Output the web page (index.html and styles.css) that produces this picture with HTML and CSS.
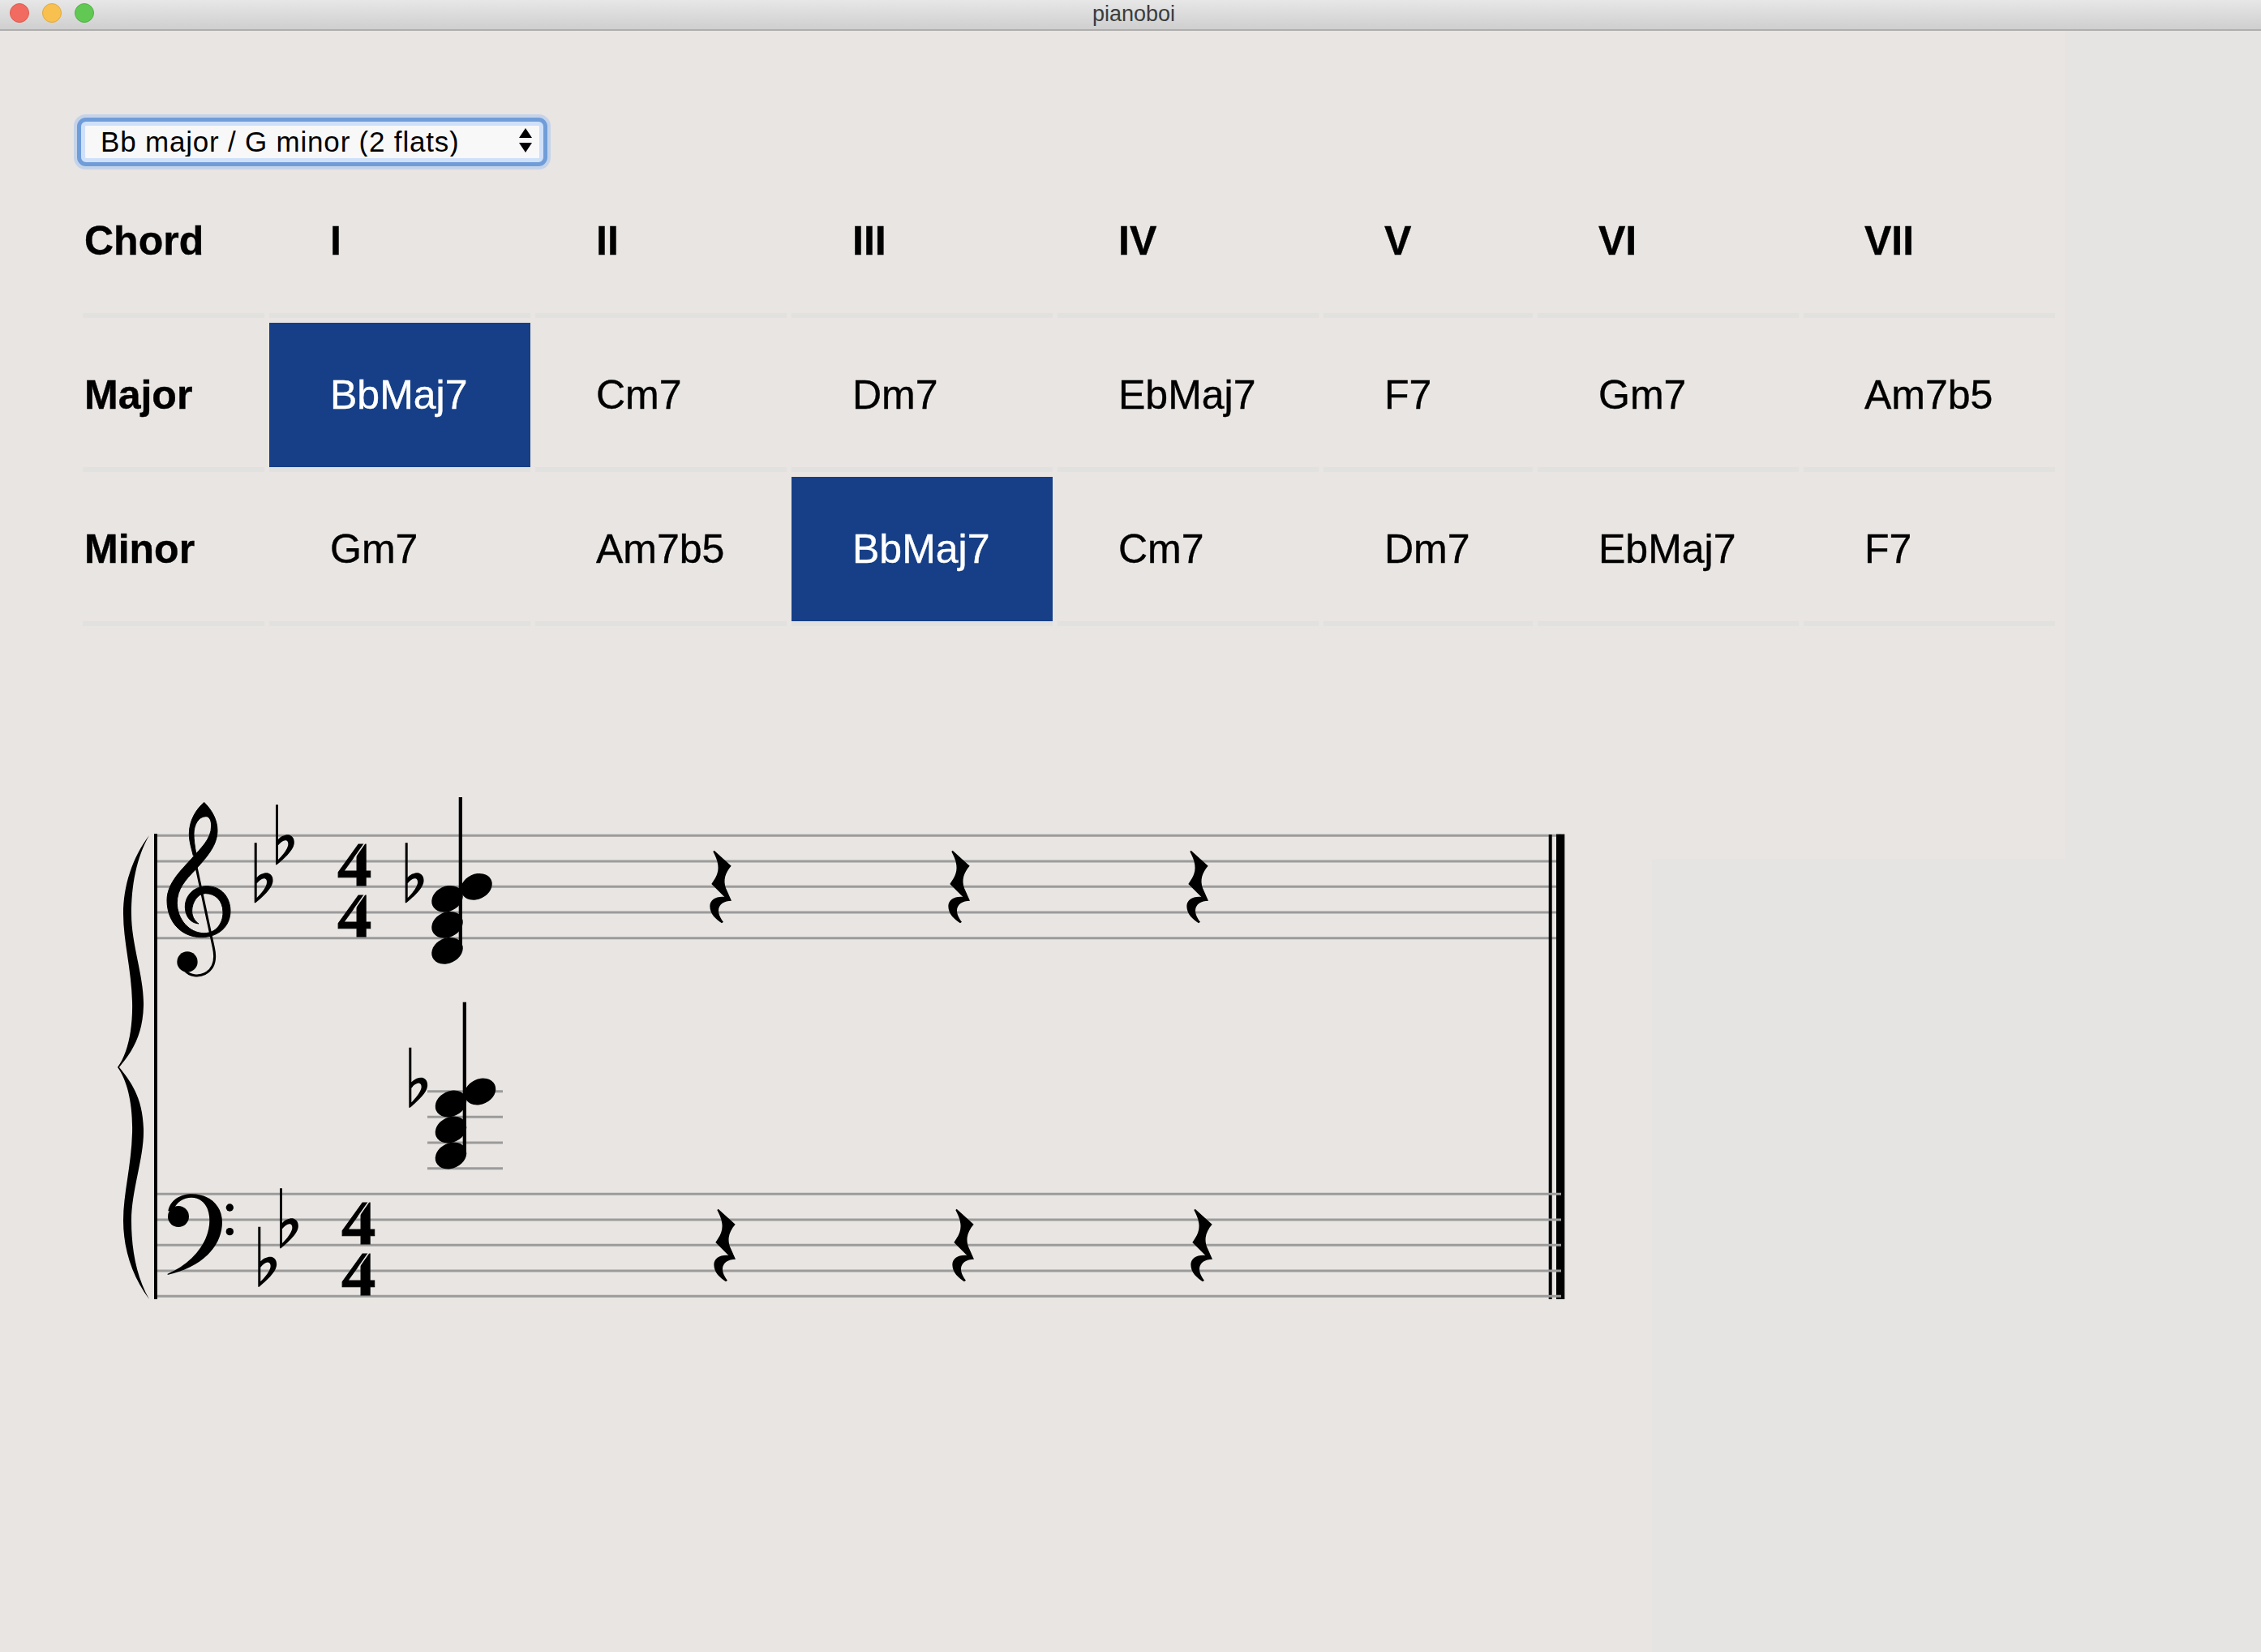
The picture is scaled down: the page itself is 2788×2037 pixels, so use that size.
FILE: index.html
```html
<!DOCTYPE html>
<html>
<head>
    <title>pianoboi</title>
    <link rel="stylesheet" href="styles.css">
</head>
<body>
    <div class="titlebar">
        <div class="lights">
            <span class="light light-red"></span>
            <span class="light light-yellow"></span>
            <span class="light light-green"></span>
        </div>
        <div class="window-title">pianoboi</div>
    </div>

    <div class="content">
        <div class="key-picker">
            <select class="key-select">
                <option>Bb major / G minor (2 flats)</option>
            </select>
            <svg class="select-arrows" width="16" height="30" viewBox="0 0 16 30">
                <path d="M8 0L16 12H0Z"/>
                <path d="M0 18H16L8 30Z"/>
            </svg>
        </div>

        <table class="chords">
            <colgroup>
                <col class="col-label">
                <col class="col-wide">
                <col class="col-mid">
                <col class="col-wide">
                <col class="col-wide">
                <col class="col-narrow">
                <col class="col-wide">
                <col class="col-mid">
            </colgroup>
            <tr>
                <th class="row-label">Chord</th>
                <th>I</th>
                <th>II</th>
                <th>III</th>
                <th>IV</th>
                <th>V</th>
                <th>VI</th>
                <th>VII</th>
            </tr>
            <tr>
                <th class="row-label">Major</th>
                <td class="current">BbMaj7</td>
                <td>Cm7</td>
                <td>Dm7</td>
                <td>EbMaj7</td>
                <td>F7</td>
                <td>Gm7</td>
                <td>Am7b5</td>
            </tr>
            <tr>
                <th class="row-label">Minor</th>
                <td>Gm7</td>
                <td>Am7b5</td>
                <td class="current">BbMaj7</td>
                <td>Cm7</td>
                <td>Dm7</td>
                <td>EbMaj7</td>
                <td>F7</td>
            </tr>
        </table>

        <svg class="score" width="1900" height="680" viewBox="100 960 1900 680">
            <defs>
                <g id="flat" transform="scale(.3333)">
                    <path fill-rule="evenodd" d="M0 0H9V128C20 115 40 108 52 112C66 118 70 130 68 145C64 170 30 200 4 222H0ZM9 150V203C22 190 38 172 44 155C48 145 46 134 38 132C30 130 18 138 9 150Z"/>
                </g>
                <g id="rest" transform="scale(.3333)">
                    <path d="M88 90L92 86L155 143C132 170 125 195 135 225L156 272C130 272 108 285 108 308C108 325 118 340 126 350L120 355C100 342 76 322 76 292C76 268 100 255 130 258L82 210C95 190 110 170 106 140C104 120 95 105 88 90Z"/>
                </g>
                <g id="chord">
                    <ellipse cx="0" cy="0" rx="20" ry="15.5" transform="rotate(-25)"/>
                    <ellipse cx="0" cy="32" rx="20" ry="15.5" transform="rotate(-25 0 32)"/>
                    <ellipse cx="0" cy="64" rx="20" ry="15.5" transform="rotate(-25 0 64)"/>
                    <ellipse cx="36" cy="-15" rx="20" ry="15.5" transform="rotate(-25 36 -15)"/>
                </g>
            </defs>

            <!-- top staff -->
            <path class="staff-line" d="M193 1030.3H1925M193 1062H1919M193 1093.3H1919M193 1125H1919M193 1156.7H1919"/>

            <!-- final barline -->
            <rect x="1909.7" y="1029" width="4" height="573"/>
            <rect x="1919" y="1028.6" width="10.3" height="573.4"/>

            <!-- bottom staff, drawn over the barline like the app does -->
            <path class="staff-line" d="M193 1472.3H1925M193 1504H1925M193 1535.3H1925M193 1567H1925M193 1598.3H1925"/>

            <!-- brace and left barline -->
            <path d="M184 1030C163 1058 152 1092 152 1127C152 1160 162 1195 163 1235C164 1270 157 1300 145 1316C157 1332 164 1362 163 1397C162 1437 152 1472 152 1505C152 1540 163 1574 184 1602C168 1574 162 1540 162 1505C162 1467 178 1427 177 1392C176 1352 160 1332 147 1316C160 1300 176 1280 177 1240C178 1205 162 1165 162 1127C162 1092 168 1058 184 1030Z"/>
            <rect x="190" y="1028" width="4" height="574"/>

            <!-- treble clef -->
            <g transform="translate(130 960) scale(.3333)">
                <path class="clef-body" d="M365 88C392 115 414 150 414 192C414 245 380 285 335 335C295 375 265 410 265 460C265 520 310 572 365 572C410 572 435 535 435 495C435 450 405 425 370 425C340 425 320 460 320 490C320 515 335 530 345 537C315 535 295 510 295 475C295 430 330 398 375 398C430 398 462 440 462 490C462 550 415 587 355 587C280 587 228 530 228 450C228 385 285 335 320 295C350 260 392 225 392 175C392 155 385 140 372 140C345 140 327 170 327 205C327 225 330 250 336 280L325 285C318 255 310 235 310 205C310 155 335 115 365 88Z"/>
                <path class="clef-stem" d="M328 290L400 625C410 670 400 705 368 722C345 734 312 730 296 712"/>
                <circle cx="303" cy="678" r="38"/>
            </g>

            <!-- bass clef -->
            <g transform="translate(130 1230) scale(.3333)">
                <path d="M230 1026C350 1000 432 925 432 830C432 770 385 727 320 727C275 727 240 750 232 790L250 790C262 755 290 740 318 740C360 740 385 775 385 825C385 905 320 985 230 1022Z"/>
                <circle cx="270" cy="810" r="39"/>
                <circle cx="460" cy="777" r="14"/>
                <circle cx="460" cy="866" r="14"/>
            </g>

            <!-- key signatures -->
            <use href="#flat" transform="translate(313.7 1039.3)"/>
            <use href="#flat" transform="translate(340 992.3)"/>
            <use href="#flat" transform="translate(318.3 1512.7)"/>
            <use href="#flat" transform="translate(345 1465.3)"/>

            <!-- time signatures -->
            <text class="time" transform="translate(416 0) scale(1.07 1)" x="0 0" y="1092 1155">44</text>
            <text class="time" transform="translate(421 0) scale(1.07 1)" x="0 0" y="1534 1597">44</text>
            <path class="time-slash" d="M451 1038L437 1058M451 1101L437 1121M456 1480L442 1500M456 1543L442 1563"/>

            <!-- top chord -->
            <use href="#flat" transform="translate(499.7 1039.3)"/>
            <use href="#chord" transform="translate(551.5 1108.3)"/>
            <rect x="565.7" y="983" width="4.3" height="190"/>

            <!-- bottom chord with ledger lines -->
            <path class="staff-line" d="M527 1345.7H620M527 1377.3H620M527 1409H620M527 1440.7H620"/>
            <use href="#flat" transform="translate(504.3 1291.7)"/>
            <use href="#chord" transform="translate(556 1361)"/>
            <rect x="570.7" y="1235.7" width="4.3" height="188"/>

            <!-- rests -->
            <use href="#rest" transform="translate(850 1020)"/>
            <use href="#rest" transform="translate(1144 1020)"/>
            <use href="#rest" transform="translate(1438 1020)"/>
            <use href="#rest" transform="translate(855 1462)"/>
            <use href="#rest" transform="translate(1149 1462)"/>
            <use href="#rest" transform="translate(1443 1462)"/>
        </svg>
    </div>
</body>
</html>
```

FILE: styles.css
```css
html, body {
    margin: 0;
    height: 2037px;
    overflow: hidden;
}
body {
    font-family: "Liberation Sans", Arial, sans-serif;
    color: #000;
    background-color: #e9e5e2;
    background-image: linear-gradient(#e5e4e2, #e5e4e2), linear-gradient(#e5e4e2, #e5e4e2);
    background-repeat: no-repeat;
    background-position: 2037px 1059px, 2546px 0;
    background-size: 751px 978px, 242px 1059px;
}

.titlebar {
    position: relative;
    display: flex;
    align-items: center;
    justify-content: center;
    height: 38px;
    padding: 0 0 2px 8px;
    box-sizing: border-box;
    background: linear-gradient(#e7e7e7, #cfcfcf);
    border-bottom: 2px solid #b0aeac;
}
.lights {
    position: absolute;
    left: 12px;
    top: 4px;
    display: flex;
    gap: 16px;
}
.light {
    width: 24px;
    height: 24px;
    border-radius: 50%;
    box-sizing: border-box;
}
.light-red {
    background: #f26b60;
    border: 1px solid #dd5a50;
}
.light-yellow {
    background: #f8c04f;
    border: 1px solid #e0a93e;
}
.light-green {
    background: #62c854;
    border: 1px solid #51b045;
}
.window-title {
    font-size: 27px;
    color: #3c3c3c;
}

.content {
    padding: 112px 0 0 96px;
}

.key-picker {
    position: relative;
    width: 570px;
    height: 50px;
    margin-left: 4px;
}
.key-select {
    display: block;
    width: 570px;
    height: 50px;
    box-sizing: border-box;
    margin: 0;
    padding: 0 0 2px 19px;
    appearance: none;
    background: #f8f8f8;
    border: 5px solid #cfe0fa;
    border-radius: 6px;
    box-shadow: 0 0 0 5px #709dd8, 0 0 0 9px #c5d3ea;
    font-family: "Liberation Sans", Arial, sans-serif;
    font-size: 35px;
    letter-spacing: .8px;
    color: #000;
}
.select-arrows {
    position: absolute;
    left: 540px;
    top: 8px;
}

.chords {
    table-layout: fixed;
    border-collapse: separate;
    border-spacing: 6px;
    width: 2444px;
    margin-top: 2px;
    font-size: 50px;
    -webkit-text-stroke: .4px;
}
.col-label { width: 224px; }
.col-wide { width: 322px; }
.col-mid { width: 310px; }
.col-narrow { width: 258px; }

.chords th, .chords td {
    height: 178px;
    padding: 0 0 0 75px;
    box-sizing: content-box;
    border-bottom: 6px solid #e1e1e0;
    text-align: left;
    vertical-align: middle;
    white-space: nowrap;
}
.chords .row-label {
    padding-left: 2px;
}
.chords .current {
    background: #163f87;
    color: #fff;
}

.score {
    display: block;
    margin: 182px 0 0 4px;
}
.staff-line {
    fill: none;
    stroke: #9b9b9b;
    stroke-width: 3;
}
.clef-body {
    stroke: #000;
    stroke-width: 3;
}
.clef-stem {
    fill: none;
    stroke: #000;
    stroke-width: 9;
}
.time {
    font-family: "Liberation Serif", serif;
    font-weight: bold;
    font-size: 79px;
    stroke: #000;
    stroke-width: 1px;
}
.time-slash {
    fill: none;
    stroke: #e9e5e2;
    stroke-width: 1.5;
}
```
